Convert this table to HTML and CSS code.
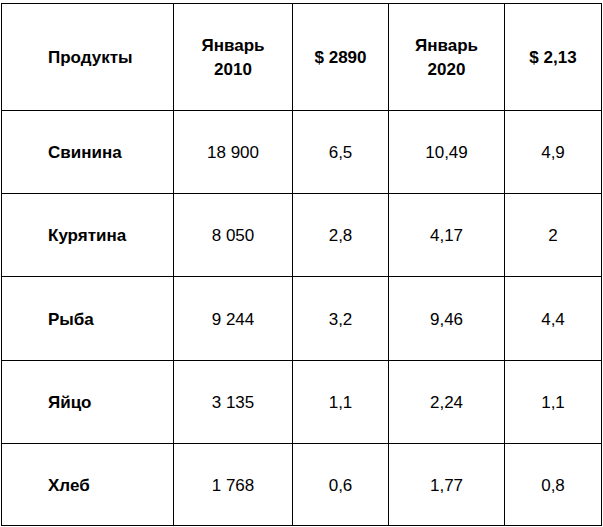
FILE: index.html
```html
<!DOCTYPE html>
<html>
<head>
<meta charset="utf-8">
<link rel="stylesheet" href="styles.css">
</head>
<body>
<table class="prices">
  <colgroup>
    <col class="c1"><col class="c2"><col class="c3"><col class="c4"><col class="c5">
  </colgroup>
  <tr class="head">
    <th class="name">Продукты</th>
    <th>Январь<br>2010</th>
    <th>$ 2890</th>
    <th>Январь<br>2020</th>
    <th>$ 2,13</th>
  </tr>
  <tr class="r1">
    <td class="name">Свинина</td><td>18 900</td><td>6,5</td><td>10,49</td><td>4,9</td>
  </tr>
  <tr class="r2">
    <td class="name">Курятина</td><td>8 050</td><td>2,8</td><td>4,17</td><td>2</td>
  </tr>
  <tr class="r3">
    <td class="name">Рыба</td><td>9 244</td><td>3,2</td><td>9,46</td><td>4,4</td>
  </tr>
  <tr class="r4">
    <td class="name">Яйцо</td><td>3 135</td><td>1,1</td><td>2,24</td><td>1,1</td>
  </tr>
  <tr class="r5">
    <td class="name">Хлеб</td><td>1 768</td><td>0,6</td><td>1,77</td><td>0,8</td>
  </tr>
</table>
</body>
</html>
```

FILE: styles.css
```css
html, body {
  margin: 0;
  padding: 0;
  background: #fff;
}
body {
  padding: 3px 0 0 1px;
  font-family: "Liberation Sans", Arial, sans-serif;
  font-size: 17px;
  color: #000;
}
.prices {
  border-collapse: collapse;
  table-layout: fixed;
  width: 600px;
}
.prices th, .prices td {
  border: 1px solid #000;
  padding: 2px 0 0 0;
  text-align: center;
  vertical-align: middle;
  line-height: 24px;
}
.prices th {
  font-weight: bold;
}
.prices .name {
  text-align: left;
  padding-left: 46px;
  font-weight: bold;
}
.c1 { width: 172px; }
.c2 { width: 119px; }
.c3 { width: 96px; }
.c4 { width: 116px; }
.c5 { width: 97px; }
.head { height: 107px; }
.r1 { height: 83px; }
.r2 { height: 83px; }
.r3 { height: 84px; }
.r4 { height: 83px; }
.r5 { height: 82px; }
```
